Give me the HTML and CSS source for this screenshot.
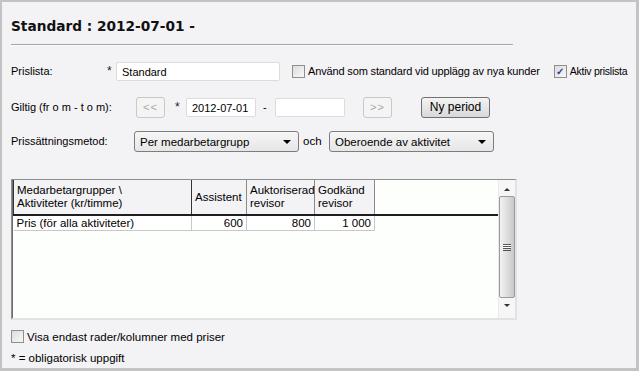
FILE: index.html
```html
<!DOCTYPE html>
<html lang="sv">
<head>
  <meta charset="UTF-8">
  <title>Prislista</title>
  <link rel="stylesheet" href="styles.css">
</head>
<body>
  <div class="panel">
    <h1 class="title">Standard : 2012-07-01 -</h1>
    <div class="rule"></div>

    <div class="row row-name">
      <span class="label label-name">Prislista:</span>
      <span class="star">*</span>
      <div class="field field-name">Standard</div>
      <label class="check check-default"><span class="box"></span>Använd som standard vid upplägg av nya kunder</label>
      <label class="check check-active"><span class="box checked">&#10003;</span>Aktiv prislista</label>
    </div>

    <div class="row row-period">
      <span class="label label-period">Giltig (fr o m - t o m):</span>
      <button class="btn btn-nav">&lt;&lt;</button>
      <span class="star star-date">*</span>
      <div class="field field-date">2012-07-01</div>
      <span class="dash">-</span>
      <div class="field field-date"></div>
      <button class="btn btn-nav btn-next">&gt;&gt;</button>
      <button class="btn btn-new">Ny period</button>
    </div>

    <div class="row row-method">
      <span class="label label-method">Prissättningsmetod:</span>
      <div class="select">Per medarbetargrupp<span class="caret"></span></div>
      <span class="and">och</span>
      <div class="select">Oberoende av aktivitet<span class="caret"></span></div>
    </div>

    <div class="grid-frame">
      <div class="grid-body">
        <table class="grid">
          <thead>
            <tr>
              <th class="col-first">Medarbetargrupper \<br>Aktiviteter (kr/timme)</th>
              <th class="col-a">Assistent</th>
              <th class="col-b">Auktoriserad<br>revisor</th>
              <th class="col-c">Godkänd<br>revisor</th>
              <th class="col-fill"></th>
            </tr>
          </thead>
          <tbody>
            <tr>
              <td class="row-head">Pris (för alla aktiviteter)</td>
              <td class="num">600</td>
              <td class="num">800</td>
              <td class="num">1 000</td>
              <td class="fill"></td>
            </tr>
          </tbody>
        </table>
      </div>
      <div class="scrollbar">
        <span class="arrow up"></span>
        <div class="thumb"><span class="grip"></span></div>
        <span class="arrow down"></span>
      </div>
    </div>

    <label class="check check-only"><span class="box"></span>Visa endast rader/kolumner med priser</label>
    <p class="note">* = obligatorisk uppgift</p>
  </div>
</body>
</html>
```

FILE: styles.css
```css
* {
  box-sizing: border-box;
}

html, body {
  margin: 0;
  padding: 0;
}

body {
  font-family: 'Liberation Sans', Arial, sans-serif;
  font-size: 11px;
  color: #000;
  background: #f3f2f5;
}

.panel {
  width: 639px;
  height: 371px;
  border-style: solid;
  border-color: #c3c3c3;
  border-width: 2px 3px 3px 2px;
  background: #f3f2f5;
  padding: 0 0 0 9px;
}

.title {
  font-family: 'DejaVu Sans', Verdana, sans-serif;
  font-size: 13.7px;
  font-weight: bold;
  line-height: 16px;
  margin: 16px 0 0 0;
  color: #111;
}

.rule {
  width: 502px;
  height: 2px;
  margin-top: 10px;
  border-top: 1px solid #a5a5a5;
  border-bottom: 1px solid #fbfbfb;
}

.row {
  display: flex;
  align-items: center;
  height: 20px;
}

.row > * {
  flex: none;
}

.row-name {
  margin-top: 15px;
}

.row-period {
  margin-top: 16px;
}

.row-method {
  margin-top: 14px;
}

.label-name {
  width: 96px;
}

.label-period {
  width: 125px;
}

.label-method {
  width: 123px;
}

.star {
  width: 9px;
  font-size: 12px;
  color: #222;
}

.star-date {
  margin-left: 10px;
  width: 11px;
}

.field {
  height: 19px;
  background: #fff;
  border: 1px solid #dcdcdc;
  border-radius: 2px;
  padding: 2px 5px;
  line-height: 14px;
  white-space: nowrap;
}

.field-name {
  width: 164px;
}

.field-date {
  width: 70px;
}

.dash {
  width: 19px;
  padding-left: 7px;
}

.check {
  display: flex;
  align-items: center;
  white-space: nowrap;
}

.box {
  width: 13px;
  height: 13px;
  border: 1px solid #8e8f8f;
  background: linear-gradient(135deg, #dcdcdc, #f8f8f8);
  margin-right: 3px;
  flex: none;
  font-size: 10px;
  line-height: 11px;
  text-align: center;
  color: #2a3f9a;
  font-weight: bold;
  letter-spacing: 0;
}

.check-default {
  margin-left: 12px;
  letter-spacing: -0.15px;
}

.check-active {
  margin-left: 14px;
  font-size: 10.5px;
  letter-spacing: -0.25px;
}

.btn {
  font-family: inherit;
  font-size: 11px;
  height: 21px;
  padding: 0;
  border-radius: 3px;
}

.btn-nav {
  width: 29px;
  background: #f4f4f4;
  border: 1px solid #c9c9c9;
  color: #a8a8a8;
  letter-spacing: 1px;
}

.btn-next {
  margin-left: 18px;
}

.btn-new {
  width: 69px;
  margin-left: 29px;
  border: 1px solid #707070;
  background: linear-gradient(#f3f3f3, #e6e6e6 50%, #d8d8d8);
  color: #000;
  font-size: 12px;
}

.select {
  position: relative;
  width: 165px;
  height: 21px;
  border: 1px solid #7d7d7d;
  border-radius: 3px;
  background: linear-gradient(#f6f6f6, #e6e6e6);
  padding: 3px 5px;
  line-height: 14px;
  font-size: 11.5px;
}

.caret {
  position: absolute;
  right: 7px;
  top: 8px;
  border-left: 4px solid transparent;
  border-right: 4px solid transparent;
  border-top: 4px solid #000;
}

.and {
  width: 30px;
  padding-left: 4px;
  font-size: 11.5px;
}

.grid-frame {
  display: flex;
  width: 506px;
  height: 141px;
  margin-top: 28px;
  border-style: solid;
  border-width: 1px 2px 2px 1px;
  border-color: #8e8e8e #e2e2e2 #e2e2e2 #8e8e8e;
  background: #fdfffd;
}

.grid-body {
  flex: 1;
  border-left: 1px solid #6d6d6d;
}

.grid {
  border-collapse: collapse;
  table-layout: fixed;
  width: 100%;
  font-size: 11.5px;
}

.grid th {
  background: #f3f2f5;
  font-weight: normal;
  text-align: left;
  vertical-align: middle;
  height: 35px;
  padding: 0 3px;
  line-height: 13px;
  border: 1px solid #8a8a8a;
  border-bottom: 2px solid #1e1e1e;
  border-top: 0;
  white-space: nowrap;
}

.grid th.col-first {
  width: 178px;
  border-left: 1px solid #333;
  border-right: 1px solid #333;
}

.grid th.col-a {
  width: 55px;
}

.grid th.col-b {
  width: 68px;
}

.grid th.col-c {
  width: 60px;
}

.grid th.col-fill {
  border-top: 0;
  border-right: 0;
  background: #fdfffd;
}

.grid td {
  height: 15px;
  padding: 0 3px;
  line-height: 14px;
  border: 1px solid #c8c8c8;
  background: #fff;
}

.grid td.row-head {
  border-left: 0;
}

.grid td.num {
  text-align: right;
}

.grid td.fill {
  border: 0;
  background: #fdfffd;
}

.scrollbar {
  width: 17px;
  display: flex;
  flex-direction: column;
  align-items: center;
  background: #f6f6f6;
  border-left: 1px solid #eaeaea;
}

.arrow {
  height: 16px;
  width: 100%;
  position: relative;
}

.arrow::after {
  content: "";
  position: absolute;
  left: 5px;
  border-left: 3px solid transparent;
  border-right: 3px solid transparent;
}

.arrow.up::after {
  top: 8px;
  border-bottom: 3px solid #333;
}

.arrow.down::after {
  top: 6px;
  border-top: 3px solid #333;
}

.thumb {
  width: 16px;
  height: 102px;
  border: 1px solid #9a9a9a;
  border-radius: 2px;
  background: linear-gradient(90deg, #f2f2f2, #dadada 60%, #c8c8c8);
  display: flex;
  align-items: center;
  justify-content: center;
}

.grip {
  width: 8px;
  height: 7px;
  border-top: 1px solid #555;
  border-bottom: 1px solid #555;
  background: linear-gradient(#fff 0 1px, #555 1px 2px, #fff 2px 3px, #555 3px 4px, transparent 4px);
}

.check-only {
  margin-top: 10px;
  font-size: 11.5px;
}

.note {
  margin: 8px 0 0 0;
  line-height: 14px;
  font-size: 11.5px;
}
```
